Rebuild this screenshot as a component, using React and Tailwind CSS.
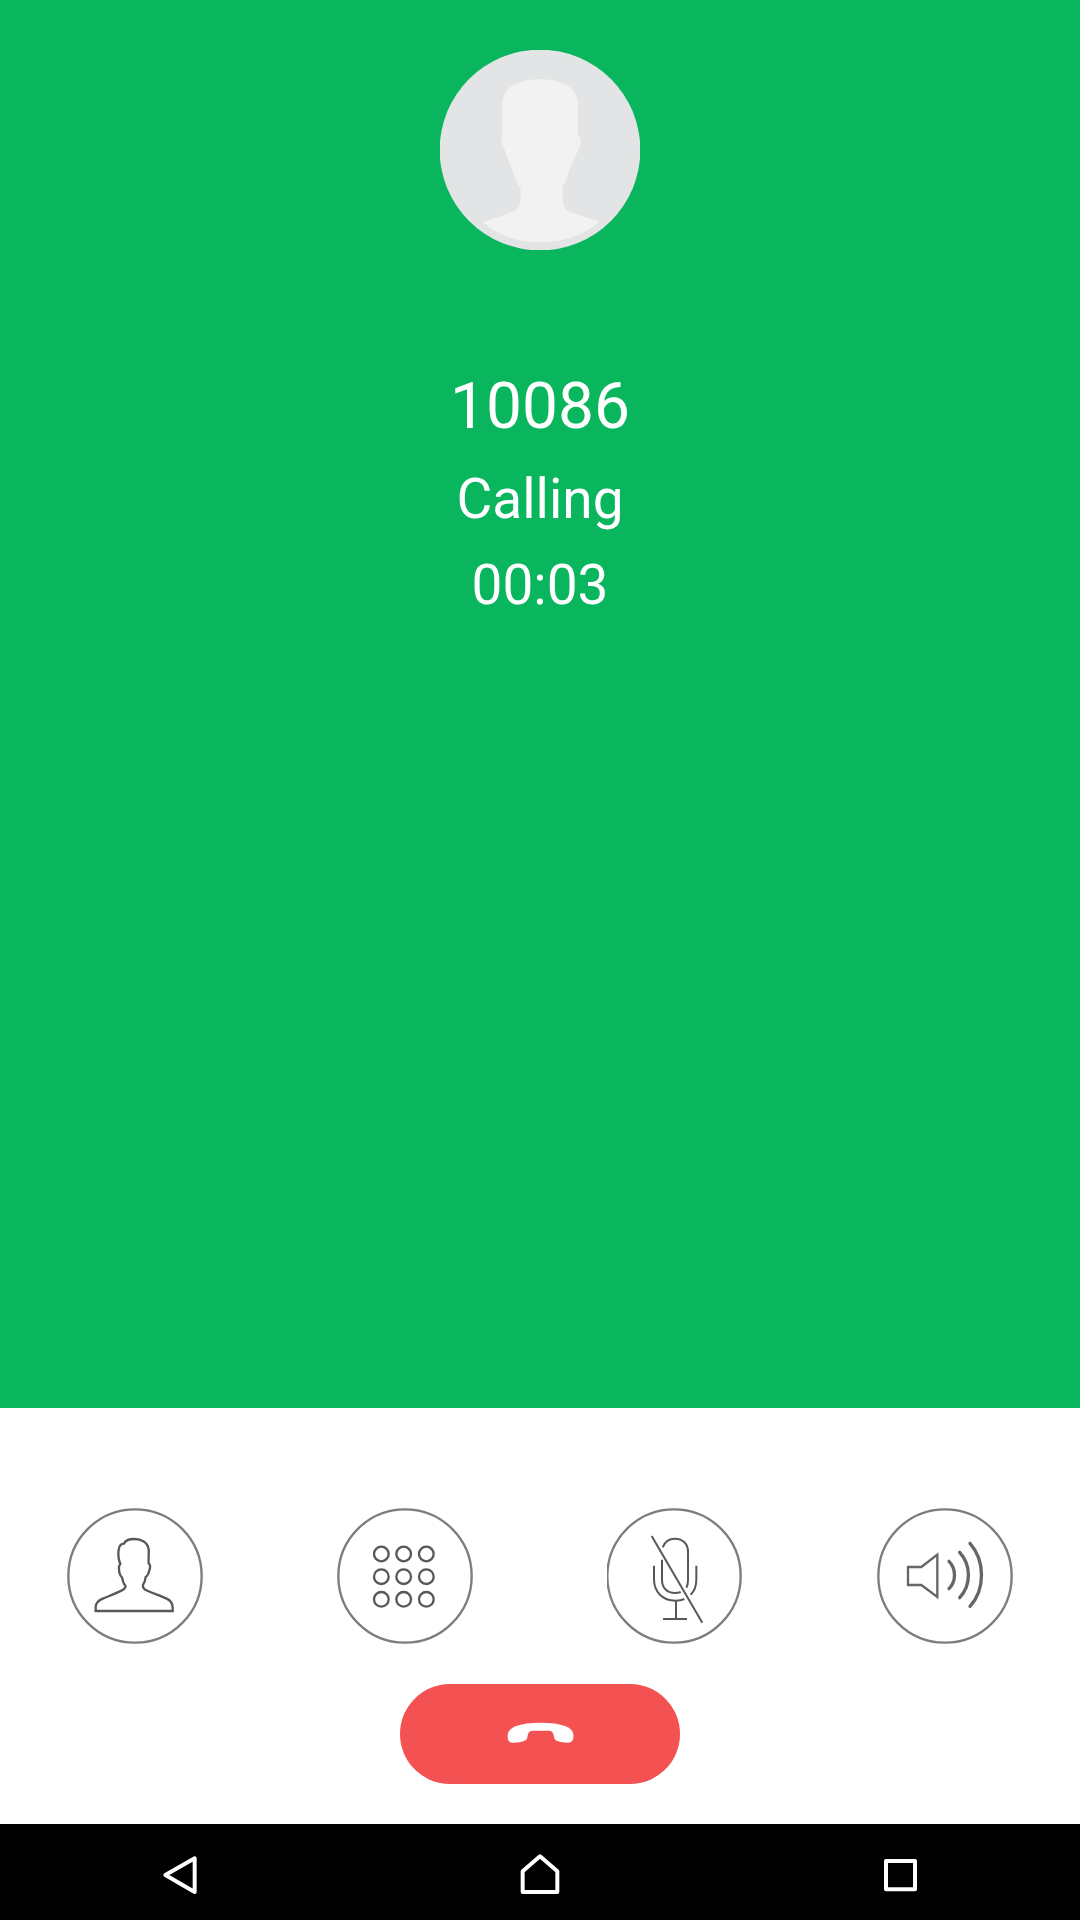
import { useState } from 'react';

function Avatar() {
  return (
    <svg
      viewBox="30 30 600 600"
      className="size-[200px]"
      role="img"
      aria-label="Contact photo"
    >
      <circle cx="330" cy="330" r="301" fill="#e2e4e6" />
      <path
        d="M330 118C262 118 217 142 217 196V288C213 294 213 306 220 320C228 340 240 372 250 400C258 424 264 436 272 442V468C272 490 268 500 258 510C232 524 184 534 160 547C206 588 264 607 330 607C400 607 462 586 508 545C476 534 436 524 410 510C400 500 398 486 398 462V440C408 430 412 404 424 376C436 348 448 328 452 310C454 298 450 290 444 286V196C444 142 398 118 330 118Z"
        fill="#f2f2f2"
      />
    </svg>
  );
}

function PersonIcon() {
  return (
    <path
      d="M107 333V321C107 307 115 301 130 295C155 285 180 276 192 267C199 261 197 257 193 253C188 248 189 236 185 231C180 226 177 214 177 206C176 199 178 195 181 192C176 180 174 162 176 149C178 135 186 131 192 131C196 121 208 117 223 117C244 117 263 127 266 148C267 162 265 178 266 190C271 194 271 203 268 211C266 220 264 228 257 231C256 241 253 249 249 254C247 262 254 269 264 273C282 281 304 288 320 296C334 303 338 312 338 323V333Z"
      stroke="#58585a"
      strokeWidth="7"
    />
  );
}

function KeypadIcon() {
  const rows = [162, 230, 298];
  const cols = [154, 221, 289];
  return rows.map((cy) =>
    cols.map((cx) => (
      <circle
        key={`${cx}-${cy}`}
        cx={cx}
        cy={cy}
        r="22"
        stroke="#58585a"
        strokeWidth="7"
      />
    ))
  );
}

function MuteIcon() {
  return (
    <g stroke="#58585a" strokeWidth="6">
      <path d="M155 108L307 368" />
      <path d="M188 142C194 126 207 116 225 116C248 116 264 132 264 155V240C264 249 263 256 259 263" />
      <path d="M186 179V240C186 264 202 279 225 279C232 279 237 278 242 276" />
      <path d="M162 197V238C162 276 188 302 226 302C236 302 245 301 253 297" />
      <path d="M289 197V238C289 258 284 273 272 284" />
      <path d="M228 303V356M189 357H261" />
    </g>
  );
}

function SpeakerIcon() {
  return (
    <g stroke="#666668">
      <path d="M114 201H154L202 164V291L154 255H114Z" strokeWidth="7" />
      <g strokeWidth="10" strokeLinecap="round">
        <path d="M237 184C259 206 259 244 237 266" />
        <path d="M269 157C304 195 304 254 269 293" />
        <path d="M300 130C346 182 346 268 300 319" />
      </g>
    </g>
  );
}

function HangUpIcon() {
  return (
    <svg viewBox="345 156 210 72" className="h-6 w-[70px]" aria-hidden="true">
      <path
        d="M353 202C352 187 358 177 376 169C396 161 422 158 451 158C482 158 508 161 528 169C546 177 552 187 550 202C549 213 545 218 535 218C522 218 508 215 500 212C493 209 492 203 491 196C489 187 486 183 478 182H426C418 183 415 187 413 197C412 205 410 211 402 213C394 216 382 218 370 218C358 219 354 213 353 202Z"
        fill="#fff"
      />
    </svg>
  );
}

const call = { number: '10086', status: 'Calling', seconds: 3 };

const actions = [
  { name: 'Contacts', Icon: PersonIcon, cx: 225 },
  { name: 'Keypad', Icon: KeypadIcon, cx: 225 },
  { name: 'Mute', Icon: MuteIcon, cx: 222 },
  { name: 'Speaker', Icon: SpeakerIcon, cx: 225 },
];

const navItems = [
  { name: 'Back', d: 'M76 195L164 145V246Z' },
  { name: 'Home', d: 'M120 139L172 184V246H68V184Z' },
  { name: 'Recent apps', d: 'M78 153H165V238H78Z' },
];

const formatTime = (s) =>
  `${String(Math.floor(s / 60)).padStart(2, '0')}:${String(s % 60).padStart(2, '0')}`;

export default function App() {
  const [active, setActive] = useState('');

  return (
    <div className="min-h-screen flex flex-col bg-white font-['Roboto',sans-serif]">
      <main className="flex-grow flex flex-col items-center bg-[#0ab65d] pt-[50px] text-white">
        <Avatar />
        <div className="mt-[119px] flex flex-col items-center gap-[22px]">
          <h1 className="text-[64px] leading-[76px]">{call.number}</h1>
          <p className="text-[55px] leading-[64px]">{call.status}</p>
          <p className="text-[55px] leading-[64px]">{formatTime(call.seconds)}</p>
        </div>
      </main>

      <section className="flex flex-col items-center gap-10 pt-[100px] pb-10">
        <div className="grid w-full grid-cols-4 justify-items-center">
          {actions.map(({ name, Icon, cx }) => (
            <button
              key={name}
              type="button"
              aria-label={name}
              aria-pressed={active === name}
              onClick={() => setActive(active === name ? '' : name)}
              className="rounded-full"
            >
              <svg viewBox="21 24 408 408" fill="none" className="size-[136px]">
                <circle cx={cx} cy="228" r="200" stroke="#7d7d7f" strokeWidth="7" />
                <Icon />
              </svg>
            </button>
          ))}
        </div>
        <button
          type="button"
          aria-label="Hang up"
          className="flex h-[100px] w-[280px] items-center justify-center rounded-full bg-[#f45152]"
        >
          <HangUpIcon />
        </button>
      </section>

      <nav className="grid h-24 grid-cols-3 place-items-center bg-black">
        {navItems.map((item) => (
          <button key={item.name} type="button" aria-label={item.name}>
            <svg
              viewBox="60 126 120 120"
              fill="none"
              stroke="#fff"
              strokeWidth="12"
              strokeLinejoin="round"
              className="size-10 overflow-visible"
            >
              <path d={item.d} />
            </svg>
          </button>
        ))}
      </nav>
    </div>
  );
}
